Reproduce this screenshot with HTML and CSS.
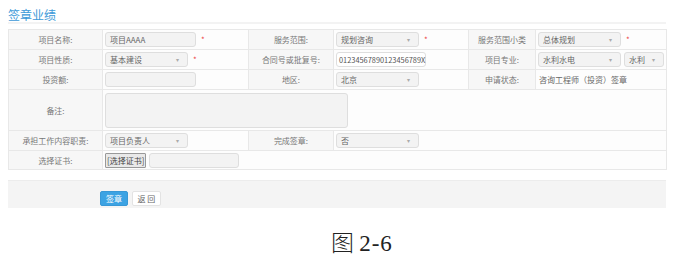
FILE: index.html
```html
<!DOCTYPE html>
<html lang="zh-CN">
<head>
  <meta charset="UTF-8" />
  <title>签章业绩</title>
  <link rel="stylesheet" href="styles.css">
</head>
<body>
  <div class="page">
    <!-- Title -->
    <h2 class="title">签章业绩</h2>

    <!-- Form table -->
    <table class="form-table">
      <colgroup>
        <col style="width:94px"><col style="width:146px"><col style="width:85px">
        <col style="width:135px"><col style="width:67px"><col style="width:131px">
      </colgroup>
      <tr>
        <td class="label">项目名称:</td>
        <td><span class="input w91">项目AAAA</span><span class="req">*</span></td>
        <td class="label">服务范围:</td>
        <td><span class="select w83">规划咨询</span><span class="req">*</span></td>
        <td class="label">服务范围小类</td>
        <td><span class="select w83">总体规划</span><span class="req">*</span></td>
      </tr>
      <tr>
        <td class="label">项目性质:</td>
        <td><span class="select w83">基本建设</span><span class="req">*</span></td>
        <td class="label">合同号或批复号:</td>
        <td><span class="input w90 code">01234567890123456789X</span></td>
        <td class="label">项目专业:</td>
        <td><span class="select w83">水利水电</span><span class="select w40 gap">水利</span></td>
      </tr>
      <tr>
        <td class="label">投资额:</td>
        <td><span class="input w91"></span></td>
        <td class="label">地区:</td>
        <td><span class="select w83">北京</span></td>
        <td class="label">申请状态:</td>
        <td><span class="plain">咨询工程师（投资）签章</span></td>
      </tr>
      <tr class="tall">
        <td class="label">备注:</td>
        <td colspan="5"><span class="textarea"></span></td>
      </tr>
      <tr>
        <td class="label">承担工作内容职责:</td>
        <td><span class="select w83">项目负责人</span></td>
        <td class="label">完成签章:</td>
        <td colspan="3"><span class="select w83">否</span></td>
      </tr>
      <tr class="last">
        <td class="label">选择证书:</td>
        <td colspan="5"><span class="btn-file">[选择证书]</span><span class="input w90 gap"></span></td>
      </tr>
    </table>

    <!-- Actions -->
    <div class="actions">
      <span class="btn btn-primary">签章</span>
      <span class="btn btn-default">返 回</span>
    </div>

    <p class="caption"><span class="fig">图</span> <span class="num">2-6</span></p>
  </div>
</body>
</html>
```

FILE: styles.css
```css
/* Reset */
* {
  margin: 0;
  padding: 0;
  box-sizing: border-box;
}
body {
  font-family: "Noto Sans CJK SC", "Noto Sans", sans-serif;
  font-size: 8px;
  color: #666;
  background: #fff;
}
.page {
  width: 682px;
  padding: 0 16px 0 8px;
}

/* Title */
.title {
  font-size: 12px;
  font-weight: normal;
  color: #3d9ad8;
  line-height: 14px;
  padding-top: 8px;
  height: 24px;
  border-bottom: 2px solid #f3f3f3;
}

/* Form table */
.form-table {
  width: 658px;
  margin-top: 5px;
  border-collapse: collapse;
  table-layout: fixed;
}
.form-table td {
  height: 20px;
  border: 1px solid #e8e8e8;
  border-left: none;
  background: #fdfdfd;
  padding: 0 2px;
  white-space: nowrap;
  overflow: hidden;
  vertical-align: middle;
}
.form-table td.label {
  background: #f7f7f7;
  text-align: center;
  color: #777;
  border-left: 1px solid #e8e8e8;
}
.form-table tr.tall td {
  height: 41px;
}
.form-table tr.last td {
  height: 19px;
}

/* Controls */
.input,
.select,
.textarea {
  display: inline-block;
  vertical-align: middle;
  height: 15px;
  line-height: 13px;
  padding: 0 4px;
  background: #f3f3f3;
  border: 1px solid #dedede;
  border-radius: 3px;
  color: #666;
}
.select {
  position: relative;
  padding-right: 12px;
}
.select::after {
  content: "▾";
  position: absolute;
  right: 8px;
  top: 0;
  font-size: 6px;
  color: #aaa;
}
.code {
  background: #fff;
  font-size: 7.4px;
  padding: 0 2px;
  color: #555;
}
.textarea {
  width: 243px;
  height: 35px;
}
.w91 { width: 91px; }
.w90 { width: 90px; }
.w83 { width: 83px; }
.w40 { width: 40px; }
.gap { margin-left: 3px; }
.req {
  color: #e44;
  margin-left: 5px;
  vertical-align: middle;
}
.plain {
  padding-left: 1px;
}
.btn-file {
  display: inline-block;
  vertical-align: middle;
  height: 15px;
  line-height: 13px;
  padding: 0 1px;
  border: 1px solid #999;
  background: #e9e9e9;
  color: #444;
  border-radius: 1px;
}

/* Actions */
.actions {
  margin-top: 10px;
  height: 28px;
  background: #f4f4f4;
  border-top: 1px solid #ececec;
  padding: 10px 0 0 92px;
  width: 658px;
}
.btn {
  display: inline-block;
  height: 15px;
  line-height: 13px;
  text-align: center;
  border-radius: 2px;
  vertical-align: top;
}
.btn-primary {
  width: 28px;
  background: #3ca3e3;
  border: 1px solid #3898d6;
  color: #fff;
}
.btn-default {
  width: 29px;
  margin-left: 2px;
  background: #fff;
  border: 1px solid #e3e3e3;
}

/* Caption */
.caption {
  margin-top: 20px;
  padding-left: 323px;
  font-size: 23px;
  line-height: 26px;
  color: #222;
}
.caption .fig {
  font-family: "Noto Sans CJK SC", sans-serif;
  font-weight: 300;
}
.caption .num {
  font-family: "Liberation Serif", serif;
  letter-spacing: 1px;
}
```
